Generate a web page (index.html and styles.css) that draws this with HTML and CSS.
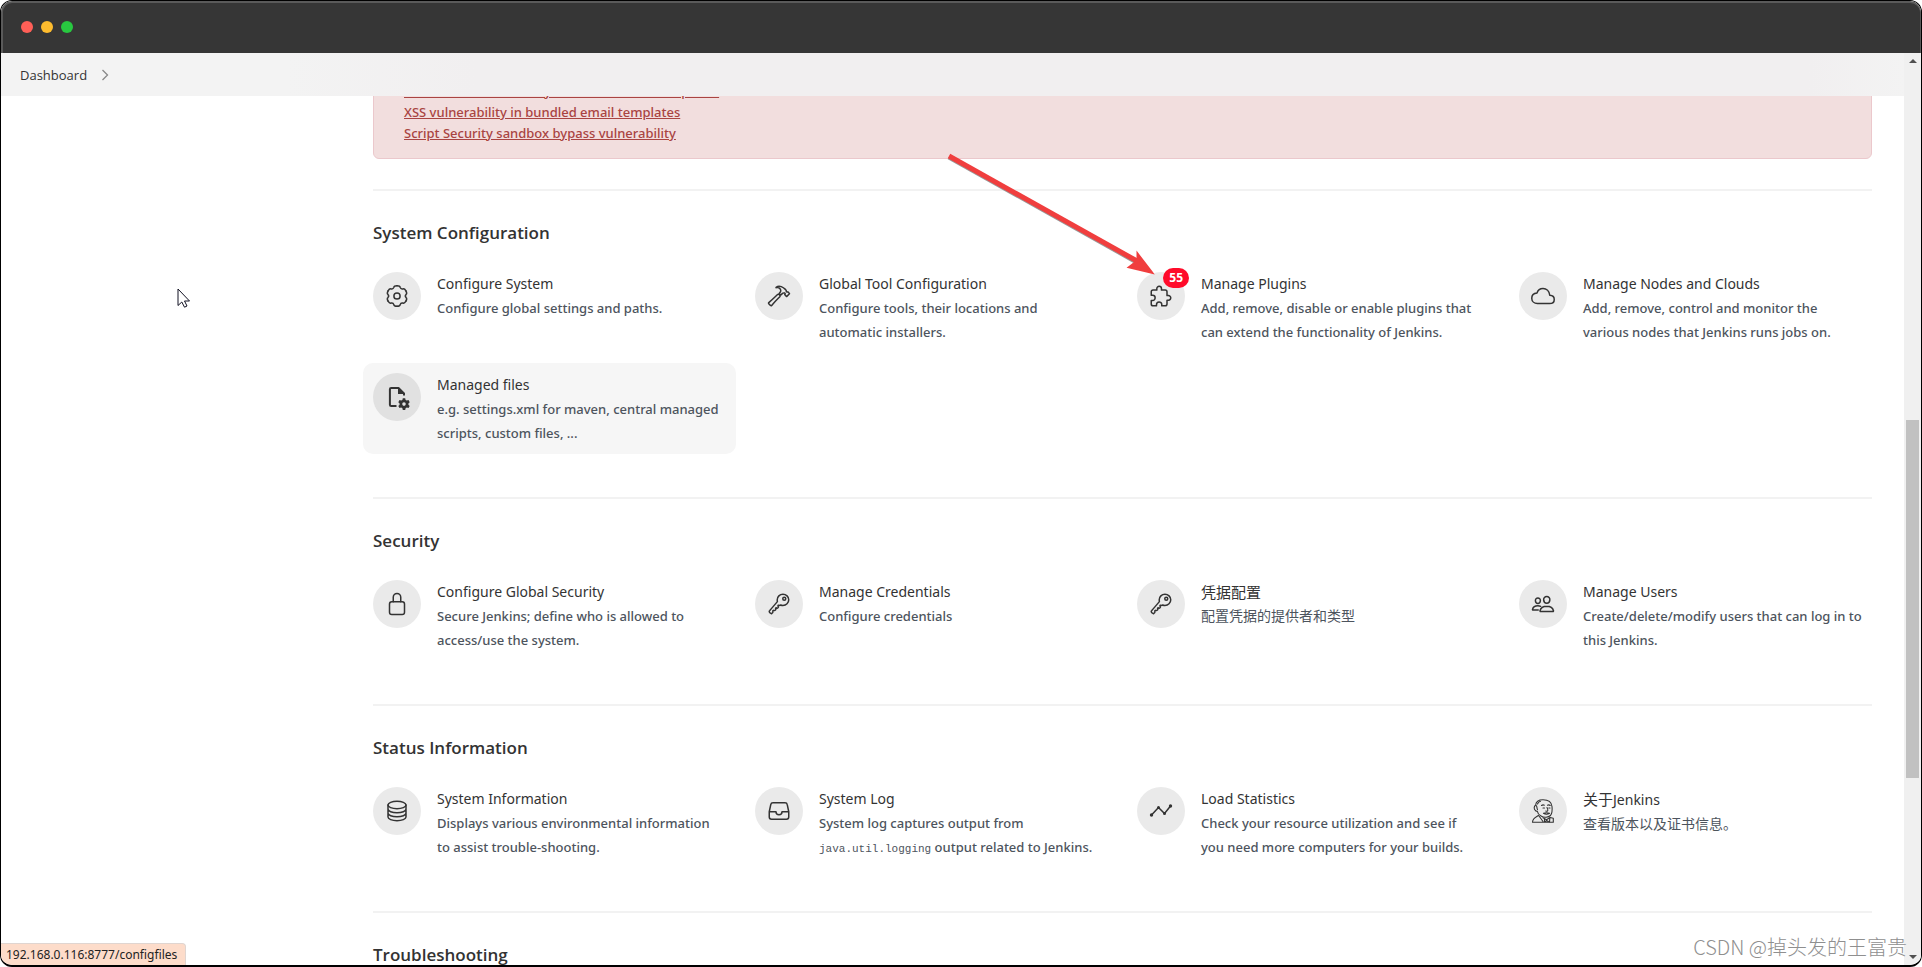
FILE: index.html
```html
<!DOCTYPE html>
<html lang="en">
<head>
<meta charset="utf-8">
<title>Manage Jenkins</title>
<link rel="stylesheet" href="styles.css">
</head>
<body>
<div class="window">
  <div class="titlebar"><span class="light red"></span><span class="light yellow"></span><span class="light green"></span></div>
  <div class="viewport">
    <div class="page">
      <nav class="breadcrumb" aria-label="Breadcrumb">
        <a href="#">Dashboard</a>
        <svg class="chevron" viewBox="0 0 8 12"><path d="M1.5 1l5 5-5 5"/></svg>
      </nav>
      <main class="content">
        <div class="alert">
          <a href="#">Stored XSS vulnerability in custom email templates</a>
          <a href="#">XSS vulnerability in bundled email templates</a>
          <a href="#">Script Security sandbox bypass vulnerability</a>
        </div>

        <section class="section">
          <h2>System Configuration</h2>
          <div class="grid">
            <a class="item" href="#">
              <span class="icon"><svg viewBox="-12 -12 24 24" class="gear"><defs><path id="lobe" d="M0-10.3Q2.9-10.3 3.2-8.6Q3.8-6.6 5.85-7.07Q7.47-7.66 8.92-5.15"/></defs><use href="#lobe"/><use href="#lobe" transform="rotate(60)"/><use href="#lobe" transform="rotate(120)"/><use href="#lobe" transform="rotate(180)"/><use href="#lobe" transform="rotate(240)"/><use href="#lobe" transform="rotate(300)"/><circle r="3.1"/></svg></span>
              <dl><dt>Configure System</dt><dd>Configure global settings and paths.</dd></dl>
            </a>
            <a class="item" href="#">
              <span class="icon"><svg viewBox="0 0 512 512"><path d="M277.42 247a24.68 24.68 0 00-4.08-5.47L255 223.44a21.63 21.63 0 00-6.56-4.57 20.93 20.93 0 00-23.28 4.27c-6.36 6.26-18 17.68-39 38.43C146 301.3 71.43 367.89 37.71 396.29a16 16 0 00-1.09 23.54l39 39.43a16.13 16.13 0 0023.67-.89c29.24-34.37 96.3-109 136-148.23 20.39-20.06 31.82-31.58 38.29-37.94a21.76 21.76 0 003.84-25.2z"/><path d="M478.43 201l-34.31-34a5.44 5.44 0 00-4-1.59 5.59 5.59 0 00-4 1.59h0a11.41 11.41 0 01-9.55 3.27c-4.48-.49-9.25-1.88-12.33-4.86-7-6.86 1.09-20.36-5.07-29a242.88 242.88 0 00-23.08-26.72c-7.06-7-34.81-33.47-81.55-52.53a123.79 123.79 0 00-47-9.24c-26.35 0-46.61 11.76-54 18.51-5.88 5.32-12 13.77-12 13.77a91.29 91.29 0 0110.81-3.2 79.53 79.53 0 0123.28-1.49C241.19 76.8 259.94 84.1 270 92c16.21 13 23.18 30.39 24.27 52.83.8 16.69-15.23 37.76-30.44 54.94a7.85 7.85 0 00.4 10.83l21.24 21.23a8 8 0 0011.14.1c13.93-13.51 31.09-28.47 40.82-34.46s17.58-7.68 21.35-8.09a35.71 35.71 0 0121.3 4.62 13.65 13.65 0 013.08 2.38c6.46 6.56 6.07 17.28-.5 23.74l-2 1.89a5.5 5.5 0 000 7.84l34.31 34a5.5 5.5 0 004 1.58 5.65 5.65 0 004-1.58L478.43 209a5.82 5.82 0 000-8z"/></svg></span>
              <dl><dt>Global Tool Configuration</dt><dd>Configure tools, their locations and automatic installers.</dd></dl>
            </a>
            <a class="item" href="#">
              <span class="icon"><svg viewBox="0 0 512 512"><path d="M413.66 246.1H386a2 2 0 01-2-2v-77.24A38.86 38.86 0 00345.14 128H267.9a2 2 0 01-2-2V98.34c0-27.14-21.5-49.86-48.64-50.33a49.53 49.53 0 00-50.4 49.51V126a2 2 0 01-2 2H87.62A39.74 39.74 0 0048 167.62V238a2 2 0 002 2h26.91c29.37 0 53.68 25.48 54.09 54.85.42 29.87-23.51 57.15-53.29 57.15H50a2 2 0 00-2 2v70.38A39.74 39.74 0 0087.62 464H158a2 2 0 002-2v-20.93c0-30.28 24.75-56.35 55-57.06 30.1-.7 57 20.31 57 50.28V462a2 2 0 002 2h71.14A38.86 38.86 0 00384 425.14v-78a2 2 0 012-2h28.48c27.63 0 49.52-22.67 49.52-50.4s-23.2-48.64-50.34-48.64z"/></svg><span class="badge">55</span></span>
              <dl><dt>Manage Plugins</dt><dd>Add, remove, disable or enable plugins that can extend the functionality of Jenkins.</dd></dl>
            </a>
            <a class="item" href="#">
              <span class="icon"><svg viewBox="0 0 512 512"><path d="M400 240c-8.89-89.54-71-144-144-144-69 0-113.44 48.2-128 96-60 6-112 43.59-112 112 0 66 54 112 120 112h260c55 0 100-27.44 100-88 0-59.82-53-85.76-96-88z"/></svg></span>
              <dl><dt>Manage Nodes and Clouds</dt><dd>Add, remove, control and monitor the various nodes that Jenkins runs jobs on.</dd></dl>
            </a>
            <a class="item hovered" href="#">
              <span class="icon"><svg viewBox="0 0 24 24"><path class="bold" d="M11.5 21H6.2Q4.9 21 4.9 19.700V4.300Q4.900 3 6.200 3H13.500L19 8.500V10.500"/><path class="solid" d="M13 2.500V9H19.500Z"/><path class="solid" fill-rule="evenodd" d="M17.800 13.200h2.400l.4 1.700 1.200.7 1.700-.5 1.200 2.100-1.300 1.200v1.300l1.300 1.200-1.200 2.100-1.700-.5-1.200.7-.4 1.700h-2.400l-.4-1.700-1.200-.7-1.700.5-1.200-2.100 1.300-1.200v-1.300l-1.300-1.200 1.200-2.100 1.700.5 1.200-.7zM19 17.300a1.800 1.800 0 100 3.600 1.800 1.800 0 000-3.600z"/></svg></span>
              <dl><dt>Managed files</dt><dd>e.g. settings.xml for maven, central managed scripts, custom files, ...</dd></dl>
            </a>
          </div>
        </section>

        <section class="section">
          <h2>Security</h2>
          <div class="grid">
            <a class="item" href="#">
              <span class="icon"><svg viewBox="0 0 512 512"><path d="M336 208v-95a80 80 0 00-160 0v95"/><rect x="96" y="208" width="320" height="272" rx="48"/></svg></span>
              <dl><dt>Configure Global Security</dt><dd>Secure Jenkins; define who is allowed to access/use the system.</dd></dl>
            </a>
            <a class="item" href="#">
              <span class="icon"><svg viewBox="0 0 512 512"><path id="key" d="M218.1 167.17c0 13 0 25.6 4.1 37.4-43.1 50.6-156.9 184.3-167.5 194.5a20.17 20.17 0 00-6.7 15c0 8.5 5.2 16.7 9.6 21.3 6.6 6.9 34.8 33 40 28 15.4-15 18.5-19 24.8-25.2 9.5-9.3-1-28.3 2.3-36s6.8-9.2 12.5-10.4 15.8 2.9 23.7 3c8.3.1 12.8-3.4 19-9.2 5-4.6 8.6-8.9 8.7-15.6.2-9-12.8-20.9-3.1-30.4s23.7 6.2 34 5 22.8-15.5 24.1-21.6-11.7-21.8-9.7-30.7c.7-3 6.8-10 11.4-11s25 6.9 29.6 5.9c5.6-1.2 12.1-7.1 17.4-10.4 15.5 6.7 29.6 9.4 47.7 9.4 68.5 0 124-53.4 124-119.2S408.500 48 340 48s-121.900 53.370-121.900 119.170zM400 144a32 32 0 11-32-32 32 32 0 0132 32z"/></svg></span>
              <dl><dt>Manage Credentials</dt><dd>Configure credentials</dd></dl>
            </a>
            <a class="item" href="#">
              <span class="icon"><svg viewBox="0 0 512 512"><use href="#key"/></svg></span>
              <dl class="cjk" lang="zh"><dt>凭据配置</dt><dd>配置凭据的提供者和类型</dd></dl>
            </a>
            <a class="item" href="#">
              <span class="icon"><svg viewBox="0 0 512 512"><path d="M402 168c-2.930 40.670-33.100 72-66 72s-63.120-31.320-66-72c-3-42.310 26.370-72 66-72s69 30.460 66 72z"/><path d="M336 304c-65.170 0-127.840 32.370-143.540 95.410-2.080 8.340 3.150 16.590 11.720 16.590h263.650c8.570 0 13.770-8.250 11.720-16.590C463.850 335.360 401.180 304 336 304z"/><path d="M200 185.940c-2.340 32.480-26.720 58.060-53 58.060s-50.700-25.570-53-58.060C91.610 152.150 115.340 128 147 128s55.390 24.770 53 57.940z"/><path d="M206 306c-18.050-8.270-37.930-11.450-59-11.450-52 0-102.100 25.850-114.650 76.200-1.650 6.660 2.530 13.250 9.370 13.250H154"/></svg></span>
              <dl><dt>Manage Users</dt><dd>Create/delete/modify users that can log in to this Jenkins.</dd></dl>
            </a>
          </div>
        </section>

        <section class="section">
          <h2>Status Information</h2>
          <div class="grid">
            <a class="item" href="#">
              <span class="icon"><svg viewBox="0 0 512 512"><ellipse cx="256" cy="128" rx="192" ry="80"/><path d="M448 214c0 44.180-86 80-192 80S64 258.180 64 214M448 300c0 44.180-86 80-192 80S64 344.180 64 300M64 127.240v257.520C64 428.520 150 464 256 464s192-35.480 192-79.240V127.240"/></svg></span>
              <dl><dt>System Information</dt><dd>Displays various environmental information to assist trouble-shooting.</dd></dl>
            </a>
            <a class="item" href="#">
              <span class="icon"><svg viewBox="0 0 512 512"><path d="M384 80H128c-26 0-43 14-48 40L48 272v112a48.140 48.140 0 0048 48h320a48.140 48.140 0 0048-48V272l-32-152c-5-27-23-40-48-40zM48 272h144M320 272h144M192 272a64 64 0 00128 0"/></svg></span>
              <dl><dt>System Log</dt><dd>System log captures output from <code>java.util.logging</code> output related to Jenkins.</dd></dl>
            </a>
            <a class="item" href="#">
              <span class="icon"><svg viewBox="0 0 24 24"><path class="thin" d="M2.500 16L9.500 8.500L15.500 14.500L21.500 7"/><g class="solid"><circle cx="2.500" cy="16" r="1.700"/><circle cx="9.500" cy="8.500" r="1.500"/><circle cx="15.500" cy="14.500" r="1.500"/><circle cx="21.500" cy="7" r="1.700"/></g></svg></span>
              <dl><dt>Load Statistics</dt><dd>Check your resource utilization and see if<br>you need more computers for your builds.</dd></dl>
            </a>
            <a class="item" href="#">
              <span class="icon"><svg viewBox="0 0 24 24"><g class="fine"><path d="M4.500 11.500C2.500 10 3 7 4.600 6.200C5 2.500 8 .8 12 .8C17 .8 20.500 3 21 7.500C21.400 11 21.300 14 19.500 16.500C17.500 18.500 13 19 10 17C7.500 15.500 6.500 14 6.200 12C5.500 12.500 4.700 12 4.500 11.500Z"/><path d="M5 6.500C6.500 7.500 5.500 9 6.500 10.500M6.500 5C7 3.500 8 2.500 9.500 2.300M10.500 6.500Q12 5.300 13.300 6.200M16.500 6.200Q18 5.300 19.200 6.500M12 9h1.500M17.800 9h1.200M16 8.500C16.500 10 17.500 11 16.500 12C15.700 12.500 14.800 12 14.800 12M12.500 14.300Q15.500 13.300 18.500 14.300Q15.500 16.300 12.500 14.300M7.500 16.500C5 18 1.500 19 1.500 23.300H22.300V19.300L19 18.500L15.500 20.800L12 18.800M8 17L12 22.500M13.500 20V23.300L15.700 21.500L18.500 23.300L18.800 19.500"/></g></svg></span>
              <dl class="cjk" lang="zh"><dt>关于<span class="latin">Jenkins</span></dt><dd>查看版本以及证书信息。</dd></dl>
            </a>
          </div>
        </section>

        <section class="section">
          <h2>Troubleshooting</h2>
        </section>
      </main>
    </div>
    <div class="scrollbar" aria-hidden="true"><span class="arrow up"></span><span class="track"><span class="thumb"></span></span><span class="arrow down"></span></div>
  </div>
  <svg class="pointer" viewBox="0 0 14 20"><path d="M1 1V17.500L4.800 14L7.500 19.200L10 18L7.500 13H12.500Z"/></svg>
  <svg class="annotation" viewBox="0 0 210 124"><path class="shadow" d="M2 4L188 108"/><path class="shaft" d="M2 3L190 108"/><path class="head" d="M204 119L191 102L191 108L183 114Z"/></svg>
  <div class="status">192.168.0.116:8777/configfiles</div>
  <div class="watermark">CSDN @掉头发的王富贵</div>
</div>
</body>
</html>
```
FILE: styles.css
```css
* { box-sizing: border-box; }
body {
  margin: 0;
  background: #fff;
  color: #333;
  font-family: "Noto Sans", "Noto Sans CJK SC", sans-serif;
  font-size: 13px;
}
a { color: inherit; text-decoration: none; }
.window {
  position: relative;
  display: flex;
  flex-direction: column;
  height: 100vh;
  border: 1px solid #000;
  border-bottom-width: 2px;
  border-radius: 12px;
  overflow: hidden;
}
.titlebar {
  flex: none;
  display: flex;
  align-items: center;
  gap: 8px;
  height: 52px;
  padding: 0 18px 2px;
  background: #363636;
  border: 2px solid #5a5a5a;
  border-width: 2px 1px 0 2px;
  border-radius: 11px 11px 0 0;
}
.light { width: 12px; height: 12px; border-radius: 50%; }
.red { background: #ff5f57; }
.yellow { background: #febc2e; }
.green { background: #28c840; }
.viewport { flex: 1; display: flex; min-height: 0; }
.page { flex: 1; min-width: 0; overflow: hidden; }
.breadcrumb {
  position: relative;
  z-index: 1;
  display: flex;
  align-items: center;
  gap: 14px;
  height: 43px;
  padding: 0 19px;
  background: linear-gradient(90deg, #f3f3f3 15%, #f1eff0 25%, #f1eff0 95%, #f3f3f3);
  font-family: "Open Sans", sans-serif;
}
.chevron { width: 8px; height: 12px; fill: none; stroke: #888; stroke-width: 1.300; }
.content { margin-top: -19px; padding: 0 32px 0 372px; }
.alert {
  display: flex;
  flex-direction: column;
  align-items: flex-start;
  margin-bottom: 30px;
  padding: 3px 30px 14px;
  border: 1px solid #ebc8cc;
  border-radius: 6px;
  background: #f2dede;
  color: #a94442;
  font-weight: 500;
  line-height: 21px;
}
.alert a { text-decoration: underline; }
.section { padding-bottom: 43px; border-top: 2px solid #f2f2f2; }
.section h2 {
  margin: 0;
  padding: 29px 0 16px;
  font-family: "Open Sans", sans-serif;
  font-size: 17px;
  font-weight: 600;
  line-height: 26px;
}
.grid {
  display: grid;
  grid-template-columns: repeat(4, 1fr);
  gap: 10px 9px;
  margin: 0 -10px;
}
.item {
  display: flex;
  gap: 16px;
  min-height: 91px;
  padding: 10px 16px 9px 10px;
  border-radius: 10px;
}
.hovered { background: #f6f6f6; }
.icon {
  position: relative;
  flex: none;
  display: flex;
  align-items: center;
  justify-content: center;
  width: 48px;
  height: 48px;
  border-radius: 50%;
  background: #eaeaea;
}
.hovered .icon { background: #e1e1e1; }
.icon svg {
  width: 24px;
  height: 24px;
  overflow: visible;
  fill: none;
  stroke: #333;
  stroke-width: 32;
  stroke-linecap: round;
  stroke-linejoin: round;
}
.icon .gear { stroke-width: 1.500; }
.icon .bold { stroke-width: 2; stroke-linecap: butt; }
.icon .thin { stroke-width: 1.500; }
.icon .fine { stroke-width: 1.100; }
.icon .solid { fill: #333; stroke: none; }
.badge {
  position: absolute;
  top: -4px;
  right: -4px;
  padding: 0 6px;
  border-radius: 10px;
  background: #ff0b2a;
  color: #fff;
  font-family: "Open Sans", sans-serif;
  font-size: 12px;
  font-weight: 700;
  line-height: 20px;
}
dl, dd { margin: 0; }
dt { font-size: 14px; line-height: 24px; }
dd { color: #4d545d; font-weight: 500; line-height: 24px; }
.cjk dt { font-size: 15px; }
.cjk dd { font-size: 14px; font-weight: 400; }
.cjk .latin { font-size: 14px; }
code { font: 11px/20px "Liberation Mono", monospace; }
.scrollbar {
  display: flex;
  flex-direction: column;
  align-items: center;
  width: 17px;
  padding: 6px 0;
  background: #f0f0f0;
}
.track { flex: 1; display: flex; flex-direction: column; align-items: center; width: 100%; padding-top: 357px; }
.thumb { width: 13px; height: 67%; background: #c1c1c1; }
.arrow { border: 4px solid transparent; }
.up { border-top: 0; border-bottom-color: #505050; }
.down { border-bottom: 0; border-top-color: #505050; }
.pointer { position: absolute; left: 176px; top: 287px; width: 14px; height: 20px; fill: #fff; stroke: #112; }
.annotation { position: absolute; left: 946px; top: 152px; width: 210px; height: 124px; fill: none; }
.shaft { stroke: #f03e3e; stroke-width: 5; }
.shadow { stroke: #999; stroke-width: 5; }
.head { fill: #f03e3e; stroke: #f03e3e; stroke-width: 3; }
.status {
  position: absolute;
  left: 0;
  bottom: 0;
  padding: 0 8px 0 5px;
  border: 1px solid #e0d5d0;
  border-width: 1px 1px 0 0;
  border-radius: 0 4px 0 0;
  background: #fddcca;
  color: #222;
  font-size: 12px;
  line-height: 21px;
}
.watermark {
  position: absolute;
  right: 14px;
  bottom: 4px;
  color: #8f8f8f;
  font-family: "Noto Sans CJK SC", sans-serif;
  font-size: 20px;
  font-weight: 300;
  line-height: 28px;
}
```
